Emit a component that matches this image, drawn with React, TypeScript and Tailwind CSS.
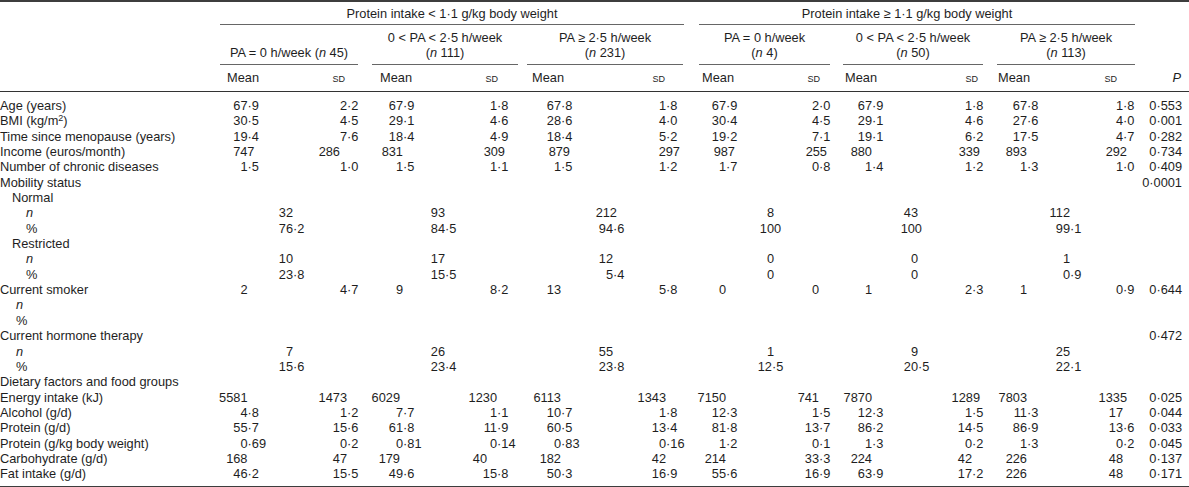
import React from "react";

type Row =
  | { kind: "stat"; label: React.ReactNode; indent?: string; v: string[]; p?: string }
  | { kind: "count"; label: React.ReactNode; indent?: string; v: string[]; p?: string }
  | { kind: "head"; label: React.ReactNode; indent?: string; p?: string };

// "747|7" = integer set 7px right of the decimal line, "286|-7" = 7px left
const ROWS: Row[] = [
  { kind: "stat", label: "Age (years)", v: ["67·9", "2·2", "67·9", "1·8", "67·8", "1·8", "67·9", "2·0", "67·9", "1·8", "67·8", "1·8"], p: "0·553" },
  {
    kind: "stat",
    label: (
      <>
        BMI (kg/m<span className="relative -top-[4px] text-[9px] leading-none">2</span>)
      </>
    ),
    v: ["30·5", "4·5", "29·1", "4·6", "28·6", "4·0", "30·4", "4·5", "29·1", "4·6", "27·6", "4·0"],
    p: "0·001",
  },
  { kind: "stat", label: "Time since menopause (years)", v: ["19·4", "7·6", "18·4", "4·9", "18·4", "5·2", "19·2", "7·1", "19·1", "6·2", "17·5", "4·7"], p: "0·282" },
  { kind: "stat", label: "Income (euros/month)", v: ["747|7", "286|-7", "831", "309|8", "879|9", "297|14", "987|9", "255|8", "880", "339|8", "893", "292|4"], p: "0·734" },
  { kind: "stat", label: "Number of chronic diseases", v: ["1·5", "1·0", "1·5", "1·1", "1·5", "1·2", "1·7", "0·8", "1·4", "1·2", "1·3", "1·0"], p: "0·409" },
  { kind: "head", label: "Mobility status", p: "0·0001" },
  { kind: "head", label: "Normal", indent: "pl-[12px]" },
  { kind: "count", label: <i>n</i>, indent: "pl-[26px]", v: ["32", "93", "212|4", "8", "43", "112"] },
  { kind: "count", label: "%", indent: "pl-[26px]", v: ["76·2", "84·5", "94·6", "100", "100|4", "99·1"] },
  { kind: "head", label: "Restricted", indent: "pl-[12px]" },
  { kind: "count", label: <i>n</i>, indent: "pl-[26px]", v: ["10", "17", "12", "0", "0", "1"] },
  { kind: "count", label: "%", indent: "pl-[26px]", v: ["23·8", "15·5", "5·4", "0", "0", "0·9"] },
  { kind: "stat", label: "Current smoker", v: ["2", "4·7", "9", "8·2", "13", "5·8", "0", "0", "1", "2·3", "1", "0·9"], p: "0·644" },
  { kind: "head", label: <i>n</i>, indent: "pl-[16px]" },
  { kind: "head", label: "%", indent: "pl-[16px]" },
  { kind: "head", label: "Current hormone therapy", p: "0·472" },
  { kind: "count", label: <i>n</i>, indent: "pl-[16px]", v: ["7", "26", "55", "1", "9", "25"] },
  { kind: "count", label: "%", indent: "pl-[16px]", v: ["15·6", "23·4", "23·8", "12·5", "20·5", "22·1"] },
  { kind: "head", label: "Dietary factors and food groups" },
  { kind: "stat", label: "Energy intake (kJ)", v: ["5581", "1473", "6029|-3", "1230", "6113", "1343", "7150", "741", "7870", "1289|8", "7803", "1335|4"], p: "0·025" },
  { kind: "stat", label: "Alcohol (g/d)", v: ["4·8", "1·2", "7·7", "1·1", "10·7", "1·8", "12·3", "1·5", "12·3", "1·5", "11·3", "17"], p: "0·044" },
  { kind: "stat", label: "Protein (g/d)", v: ["55·7", "15·6", "61·8", "11·9", "60·5", "13·4", "81·8", "13·7", "86·2", "14·5", "86·9", "13·6"], p: "0·033" },
  { kind: "stat", label: "Protein (g/kg body weight)", v: ["0·69", "0·2", "0·81", "0·14", "0·83", "0·16", "1·2", "0·1", "1·3", "0·2", "1·3", "0·2"], p: "0·045" },
  { kind: "stat", label: "Carbohydrate (g/d)", v: ["168", "47", "179|-3", "40|-10", "182", "42", "214", "33·3", "224", "42", "226", "48"], p: "0·137" },
  { kind: "stat", label: "Fat intake (g/d)", v: ["46·2", "15·5", "49·6", "15·8", "50·3", "16·9", "55·6", "16·9", "63·9", "17·2", "226", "48"], p: "0·171" },
];

const SHIFT: Record<string, string> = {
  "4": "-mr-[4px]",
  "7": "-mr-[7px]",
  "8": "-mr-[8px]",
  "9": "-mr-[9px]",
  "14": "-mr-[14px]",
  "-3": "mr-[3px]",
  "-7": "mr-[7px]",
  "-10": "mr-[10px]",
};

// integer part right of its column, fraction starts at the decimal point
const split = (raw: string) => {
  const [s, shift] = raw.split("|");
  const i = s.indexOf("·");
  const cls = shift ? SHIFT[shift] : "";
  return i < 0 ? [s, "", cls] : [s.slice(0, i), s.slice(i), cls];
};

function Dec({ value }: { value: string }) {
  const [a, b, cls] = split(value);
  return (
    <>
      <div className="flex justify-end whitespace-nowrap">
        <span className={cls}>{a}</span>
      </div>
      <div className="whitespace-nowrap">{b}</div>
    </>
  );
}

const rowCls = "h-[15.35px] leading-[15.35px]";
const pCls = "text-right pr-[7px] whitespace-nowrap";

function BodyRow({ row }: { row: Row }) {
  if (row.kind === "stat") {
    return (
      <div className={`${rowCls} grid grid-cols-[200px_47.5px_52.5px_47px_25px_31px_47px_47px_30px_34px_49px_56px_33px_27px_44px_49px_24px_29px_48px_52px_25px_30px_43px_53px_17px_49px]`}>
        <div className={`whitespace-nowrap ${row.indent ?? ""}`}>{row.label}</div>
        {row.v.map((x, i) => (
          <Dec key={i} value={x} />
        ))}
        <div className={pCls}>{row.p}</div>
      </div>
    );
  }
  if (row.kind === "count") {
    return (
      <div className={`${rowCls} grid grid-cols-[250px_43px_107px_45px_125px_43px_127px_140px_38px_112px_40px_70px_49px]`}>
        <div className={`whitespace-nowrap ${row.indent ?? ""}`}>{row.label}</div>
        <Dec value={row.v[0]} />
        <Dec value={row.v[1]} />
        <Dec value={row.v[2]} />
        <div>
          <div className="w-[61px] text-center">{row.v[3]}</div>
        </div>
        <Dec value={row.v[4]} />
        <Dec value={row.v[5]} />
        <div className={pCls}>{row.p}</div>
      </div>
    );
  }
  return (
    <div className={`${rowCls} flex`}>
      <div className={`flex-1 whitespace-nowrap ${row.indent ?? ""}`}>{row.label}</div>
      <div className={`w-[49px] ${pCls}`}>{row.p}</div>
    </div>
  );
}

function Sub({ w, ml, children }: { w: string; ml: string; children: React.ReactNode }) {
  return (
    <div className={`${w} ${ml} shrink-0 flex flex-col justify-end items-center text-center border-b border-[#666] pb-[4px] leading-[15px] whitespace-nowrap`}>
      {children}
    </div>
  );
}

function MeanSd({ w, ml }: { w: string; ml: string }) {
  return (
    <div className={`${w} ${ml} shrink-0 flex justify-between items-baseline`}>
      <span>Mean</span>
      <span className="text-[9px]">SD</span>
    </div>
  );
}

export default function App() {
  return (
    <div className="w-[1189px] bg-white text-[#1e1e1e] text-[12.8px] font-['Liberation_Sans',Arial,sans-serif]">
      <div className="h-[2px] bg-[#3d3d3d]" />

      {/* group headings */}
      <div className="flex pt-[4px]">
        <div className="ml-[220px] w-[464px] shrink-0 border-b border-[#666] pb-[3px] text-center leading-[15px]">
          Protein intake &lt; 1·1 g/kg body weight
        </div>
        <div className="ml-[15px] w-[436px] shrink-0 border-b border-[#666] pb-[3px] pr-[20px] text-center leading-[15px]">
          Protein intake ≥ 1·1 g/kg body weight
        </div>
      </div>

      {/* sub groups */}
      <div className="flex pt-[5px]">
        <Sub w="w-[138px]" ml="ml-[220px]">
          <span>
            PA = 0 h/week (<i>n</i> 45)
          </span>
        </Sub>
        <Sub w="w-[146px]" ml="ml-[14px]">
          <span>0 &lt; PA &lt; 2·5 h/week</span>
          <span>
            (<i>n</i> 111)
          </span>
        </Sub>
        <Sub w="w-[156px]" ml="ml-[9px]">
          <span>PA ≥ 2·5 h/week</span>
          <span>
            (<i>n</i> 231)
          </span>
        </Sub>
        <Sub w="w-[131px]" ml="ml-[16px]">
          <span>PA = 0 h/week</span>
          <span>
            (<i>n</i> 4)
          </span>
        </Sub>
        <Sub w="w-[140px]" ml="ml-[13px]">
          <span>0 &lt; PA &lt; 2·5 h/week</span>
          <span>
            (<i>n</i> 50)
          </span>
        </Sub>
        <Sub w="w-[138px]" ml="ml-[14px]">
          <span>PA ≥ 2·5 h/week</span>
          <span>
            (<i>n</i> 113)
          </span>
        </Sub>
      </div>

      {/* Mean / SD / P */}
      <div className="flex pt-[5px] pb-[4px] leading-[15px] border-b border-[#333]">
        <MeanSd w="w-[118px]" ml="ml-[227px]" />
        <MeanSd w="w-[118px]" ml="ml-[35px]" />
        <MeanSd w="w-[133px]" ml="ml-[34px]" />
        <MeanSd w="w-[118px]" ml="ml-[37px]" />
        <MeanSd w="w-[133px]" ml="ml-[25px]" />
        <MeanSd w="w-[119px]" ml="ml-[20px]" />
        <div className="flex-1 text-right pr-[8px] italic">P</div>
      </div>

      {/* body */}
      <div className="pt-[6px] pb-[4px] border-b-2 border-[#3d3d3d]">
        {ROWS.map((r, i) => (
          <BodyRow key={i} row={r} />
        ))}
      </div>
    </div>
  );
}
